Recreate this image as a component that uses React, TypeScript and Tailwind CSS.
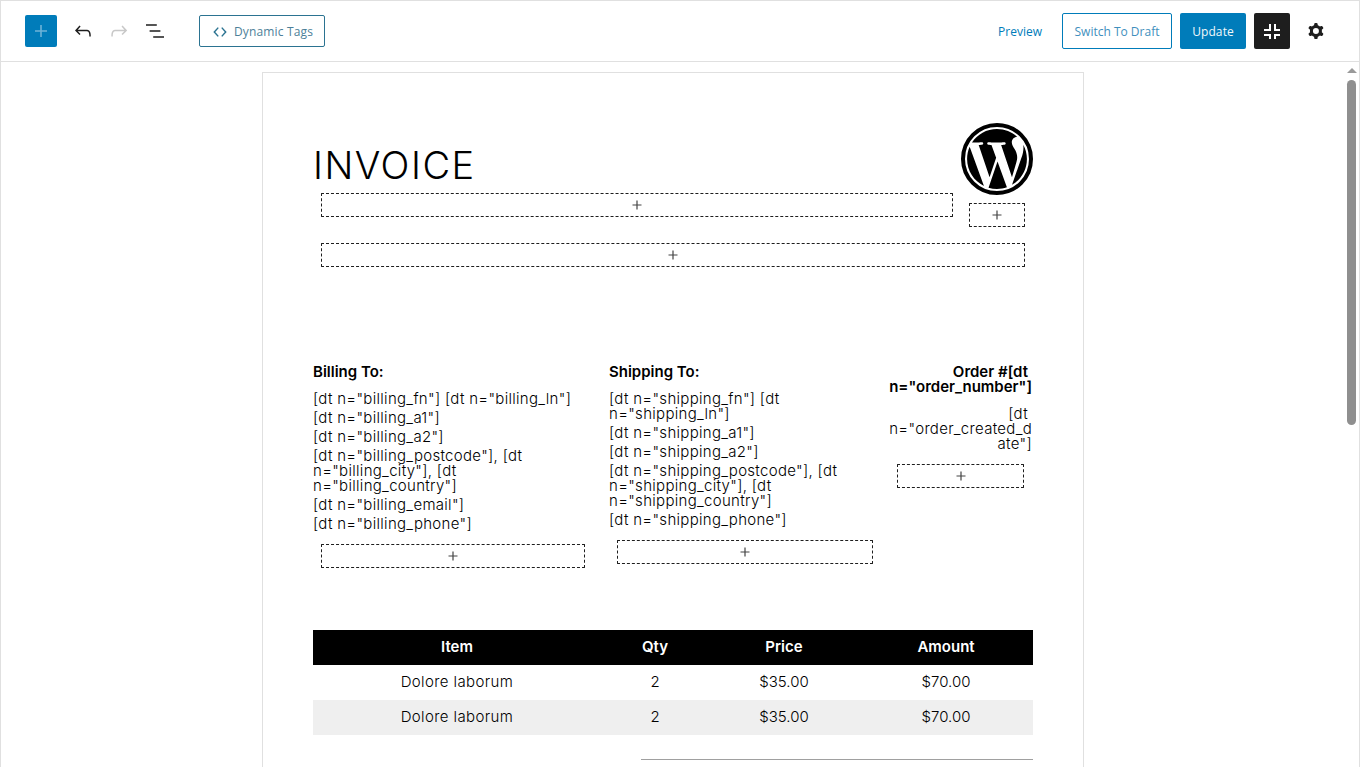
import { FaWordpress } from "react-icons/fa";

function Appender({ className = "" }: { className?: string }) {
  return (
    <div className={`flex h-6 items-center justify-center rounded-[1px] border border-dashed border-[#1e1e1e] ${className}`}>
      <svg viewBox="0 0 24 24" className="h-[18px] w-[18px] fill-[#444]">
        <path d="M18 11.2h-5.2V6h-1.6v5.2H6v1.6h5.2V18h1.6v-5.2H18z" />
      </svg>
    </div>
  );
}

function Toolbar() {
  return (
    <div className="flex h-[61px] shrink-0 items-center border-b border-[#e0e0e0] pl-6 pr-[31px] font-['Open_Sans',sans-serif] text-xs">
      <div className="flex h-8 w-8 items-center justify-center rounded-[2px] bg-[#007cba]">
        <svg viewBox="0 0 24 24" className="h-6 w-6 fill-[#6db3d8]">
          <path d="M18 11.2h-5.2V6h-1.6v5.2H6v1.6h5.2V18h1.6v-5.2H18z" />
        </svg>
      </div>
      <div className="ml-[14px] flex items-center gap-3">
        <svg viewBox="0 0 24 24" className="h-6 w-6 fill-[#1e1e1e]">
          <path d="M18.3 11.7c-.6-.6-1.4-.9-2.3-.9H6.7l2.9-3.3-1.1-1-4.5 5L8.5 16l1-1-2.7-2.7H16c.5 0 .9.2 1.3.5 1 1 1 3.4 1 4.5v.3h1.5v-.2c0-1.5 0-4.3-1.5-5.7z" />
        </svg>
        <svg viewBox="0 0 24 24" className="h-6 w-6 fill-[#c8c8c8]">
          <path d="M15.6 6.5l-1.1 1 2.9 3.3H8c-.9 0-1.7.3-2.3.9-1.4 1.5-1.4 4.2-1.4 5.6v.2h1.5v-.3c0-1.1 0-3.5 1-4.5.3-.3.7-.5 1.3-.5h9.2L14.500 15l1.1 1.1 4.6-4.6-4.6-5z" />
        </svg>
        <svg viewBox="0 0 24 24" className="h-6 w-6 fill-[#1e1e1e]">
          <path d="M13.8 5.2H3v1.5h10.8V5.2zm-3.6 12v1.5H21v-1.5H10.2zm7.2-6H6.6v1.5h10.8v-1.5z" />
        </svg>
      </div>
      <button className="ml-[32px] flex h-8 w-[126px] items-center justify-center gap-[7px] rounded-[2px] border border-[#2b7391] pl-[2px] pt-px tracking-[0.15px] text-[#4d7f99]">
        <svg viewBox="0 0 16 16" className="h-[14px] w-[14px] fill-none stroke-[#2b7391] stroke-[1.7]">
          <path d="M6 3 1.500 8 6 13M10 3l4.500 5L10 13" />
        </svg>
        Dynamic Tags
      </button>
      <div className="ml-auto flex items-center">
        <span className="mr-5 pt-px text-[#007cba]">Preview</span>
        <button className="h-9 w-[110px] rounded-[2px] border border-[#007cba] pt-px text-[#3f8fbd]">Switch To Draft</button>
        <button className="ml-2 h-9 w-[66px] rounded-[2px] bg-[#007cba] pt-px font-medium tracking-[0.1px] text-[#f2f8fb]">Update</button>
        <div className="ml-2 flex h-9 w-9 items-center justify-center rounded-[2px] bg-[#1e1e1e]">
          <svg viewBox="0 0 24 24" className="h-6 w-6 fill-white">
            <path d="M9 5h2v7H4v-2h5zM14 5h2v5h4v2h-6zM4 15h7v5H9v-3H4zM14 15h6v2h-4v3h-2z" />
          </svg>
        </div>
        <svg viewBox="0 0 24 24" className="ml-[14px] h-6 w-6 fill-[#1e1e1e]">
          <path
            fillRule="evenodd"
            clipRule="evenodd"
            d="M10.289 4.836A1 1 0 0 1 11.275 4h1.306a1 1 0 0 1 .987.836l.244 1.466c.787.26 1.503.679 2.108 1.218l1.393-.522a1 1 0 0 1 1.216.437l.653 1.13a1 1 0 0 1-.23 1.273l-1.148.944a6.025 6.025 0 0 1 0 2.435l1.149.946a1 1 0 0 1 .23 1.272l-.653 1.13a1 1 0 0 1-1.216.437l-1.394-.522c-.605.54-1.32.958-2.108 1.218l-.244 1.466a1 1 0 0 1-.987.836h-1.306a1 1 0 0 1-.986-.836l-.244-1.466a5.995 5.995 0 0 1-2.108-1.218l-1.394.522a1 1 0 0 1-1.217-.436l-.653-1.131a1 1 0 0 1 .23-1.272l1.149-.946a6.026 6.026 0 0 1 0-2.435l-1.148-.944a1 1 0 0 1-.23-1.272l.653-1.131a1 1 0 0 1 1.217-.437l1.393.522a5.994 5.994 0 0 1 2.108-1.218l.244-1.466zM14.929 12a3 3 0 1 1-6 0 3 3 0 0 1 6 0z"
          />
        </svg>
      </div>
    </div>
  );
}

function Lines({ items }: { items: React.ReactNode[] }) {
  return (
    <div className="flex flex-col gap-1 text-[15px] font-light leading-[15px] tracking-[0.3px] text-black">
      {items.map((item, i) => (
        <p key={i}>{item}</p>
      ))}
    </div>
  );
}

const rows = [
  ["Dolore laborum", "2", "$35.00", "$70.00"],
  ["Dolore laborum", "2", "$35.00", "$70.00"],
];

function Invoice() {
  return (
    <div className="ml-[261px] mt-[10px] h-[800px] w-[822px] shrink-0 border border-[#e0e0e0] px-[50px] pt-[50px] font-['Inter',sans-serif]">
      {/* Header */}
      <div className="flex">
        <div className="flex-1">
          <h1 className="h-[70px] pt-[19px] text-[38px] font-light leading-[46px] tracking-[1.5px] text-black">INVOICE</h1>
          <Appender className="ml-2 mr-2" />
        </div>
        <div className="w-[72px]">
          <div className="relative h-[72px] w-[72px]">
            <FaWordpress className="h-[72px] w-[72px] text-black" />
            <div className="absolute inset-0 rounded-full border-4 border-black" />
          </div>
          <Appender className="mx-auto mt-2 w-14" />
        </div>
      </div>
      <Appender className="ml-2 mr-2 mt-4" />

      {/* Addresses */}
      <div className="mt-[97px] grid grid-cols-[280px_280px_144px] gap-x-[8px]">
        <div>
          <h3 className="mb-3 text-[15px] font-semibold leading-[15px] text-black">Billing To:</h3>
          <Lines
            items={[
              <>[dt n="billing_fn"] [dt n="billing_ln"]</>,
              <>[dt n="billing_a1"]</>,
              <>[dt n="billing_a2"]</>,
              <>[dt n="billing_postcode"], [dt<br />n="billing_city"], [dt<br />n="billing_country"]</>,
              <>[dt n="billing_email"]</>,
              <>[dt n="billing_phone"]</>,
            ]}
          />
          <Appender className="mx-2 mt-[13px]" />
        </div>
        <div className="ml-2">
          <h3 className="mb-3 text-[15px] font-semibold leading-[15px] text-black">Shipping To:</h3>
          <Lines
            items={[
              <>[dt n="shipping_fn"] [dt<br />n="shipping_ln"]</>,
              <>[dt n="shipping_a1"]</>,
              <>[dt n="shipping_a2"]</>,
              <>[dt n="shipping_postcode"], [dt<br />n="shipping_city"], [dt<br />n="shipping_country"]</>,
              <>[dt n="shipping_phone"]</>,
            ]}
          />
          <Appender className="mx-2 mt-[13px]" />
        </div>
        <div className="pr-px text-right">
          <h3 className="mb-3 text-[15px] font-semibold leading-[15px] text-black">
            <span className="pr-1">Order #[dt</span>
            <br />n="order_number"]
          </h3>
          <p className="text-[15px] font-light leading-[15px] tracking-[0.3px] text-black">
            <span className="pr-1">[dt</span>
            <br />n="order_created_d<br />ate"]
          </p>
          <Appender className="ml-2 mr-2 mt-[13px]" />
        </div>
      </div>

      {/* Items table */}
      <div className="mt-[62px] grid grid-cols-[288px_108px_150px_174px] text-center text-[15px]">
        {["Item", "Qty", "Price", "Amount"].map((h) => (
          <div key={h} className="flex h-[35px] items-center justify-center bg-black font-semibold text-white">
            {h}
          </div>
        ))}
        {rows.map((row, r) =>
          row.map((cell, c) => (
            <div
              key={`${r}-${c}`}
              className={`flex h-[35px] items-center justify-center font-light text-black ${c === 0 ? "tracking-[0.4px]" : ""} ${r === 1 ? "bg-[#efefef]" : ""}`}
            >
              {cell}
            </div>
          )),
        )}
      </div>
      <div className="ml-[328px] mt-6 h-px bg-[#a0a0a0]" />
    </div>
  );
}

export default function App() {
  return (
    <div className="flex h-[767px] flex-col overflow-hidden border-x border-t border-[#e0e0e0] bg-white">
      <Toolbar />
      <div className="flex min-h-0 flex-1 overflow-hidden">
        <div className="flex-1 overflow-hidden">
          <Invoice />
        </div>
        {/* scrollbar */}
        <div className="flex w-[15px] shrink-0 flex-col items-center">
          <div className="mt-[6px] h-0 w-0 border-x-[5px] border-b-[5px] border-x-transparent border-b-[#9a9a9a]" />
          <div className="mt-[7px] h-[345px] w-[9px] rounded-full bg-[#8f8f8f]" />
        </div>
      </div>
    </div>
  );
}
